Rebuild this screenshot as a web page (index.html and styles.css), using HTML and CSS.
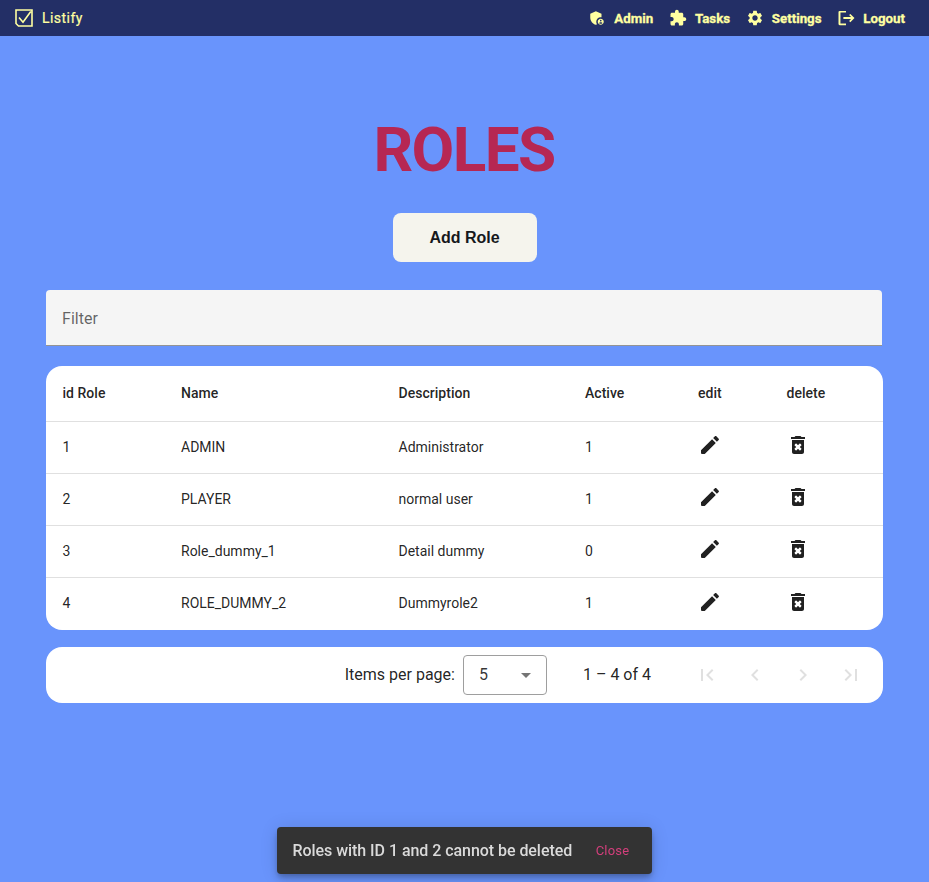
FILE: index.html
```html
<!DOCTYPE html>
<html lang="en">
<head>
<meta charset="utf-8">
<title>Listify</title>
<link rel="stylesheet" href="styles.css">
</head>
<body>
<svg class="sprite" aria-hidden="true">
  <symbol id="edit" viewBox="0 0 24 24"><path d="M3 17.500V20q0 1 1 1h2.750L17.810 9.940l-3.750-3.750L3 17.250zM20.710 7.040c.390-.390.390-1.020 0-1.410l-2.340-2.340c-.390-.390-1.020-.390-1.410 0l-1.830 1.830 3.750 3.750 1.830-1.830z"/></symbol>
  <symbol id="trash" viewBox="0 0 24 24"><path d="M6 19c0 1.100.900 2 2 2h8c1.100 0 2-.900 2-2V7H6v12zm2.460-7.120l1.410-1.410L12 12.590l2.120-2.120 1.410 1.410L13.410 14l2.120 2.120-1.410 1.410L12 15.410l-2.120 2.120-1.410-1.410L10.590 14l-2.130-2.120zM15.500 4l-1-1h-5l-1 1H5v2h14V4z"/><path class="cross" d="M9.400 11.400l5.200 5.200M14.600 11.400l-5.200 5.200"/></symbol>
</svg>
<header class="navbar">
  <a class="brand">
    <svg class="brand-icon" viewBox="0 0 18 18"><path d="M1 1h16v16H3.500L1 14.500zM4 8.500l4 4.800L15.800 2.500"/></svg>
    <span>Listify</span>
  </a>
  <nav class="menu">
    <a class="menu-item"><svg viewBox="0 0 24 24"><path d="M17 11c.34 0 .67.04 1 .09V6.27L10.500 3 3 6.270v4.910c0 4.540 3.200 8.790 7.500 9.820.550-.130 1.080-.320 1.600-.550-.690-.980-1.100-2.170-1.100-3.450 0-3.310 2.690-6 6-6z"/><path d="M17 13c-2.210 0-4 1.790-4 4s1.790 4 4 4 4-1.790 4-4-1.790-4-4-4zm0 1.380c.620 0 1.120.510 1.120 1.120s-.510 1.120-1.120 1.120-1.120-.510-1.120-1.120.500-1.120 1.120-1.120zm0 5.370c-.930 0-1.740-.460-2.240-1.170.050-.720 1.510-1.080 2.240-1.080s2.190.360 2.240 1.080c-.500.710-1.310 1.170-2.240 1.170z"/></svg><span>Admin</span></a>
    <a class="menu-item"><svg viewBox="0 0 24 24"><path d="M20.500 11H19V7c0-1.100-.900-2-2-2h-4V3.500C13 2.120 11.880 1 10.500 1S8 2.120 8 3.500V5H4c-1.100 0-1.990.900-1.990 2v3.800H3.500c1.490 0 2.700 1.210 2.700 2.700s-1.210 2.700-2.700 2.700H2V20c0 1.100.900 2 2 2h3.800v-1.500c0-1.490 1.210-2.700 2.700-2.700 1.490 0 2.700 1.210 2.700 2.700V22H17c1.100 0 2-.900 2-2v-4h1.500c1.380 0 2.500-1.120 2.500-2.500S21.880 11 20.500 11z"/></svg><span>Tasks</span></a>
    <a class="menu-item"><svg viewBox="0 0 24 24"><path d="M19.140 12.940c.040-.300.060-.610.060-.940 0-.320-.020-.640-.070-.940l2.030-1.580c.180-.140.230-.410.120-.610l-1.920-3.320c-.120-.220-.370-.290-.590-.220l-2.390.960c-.500-.380-1.030-.700-1.620-.940l-.360-2.540c-.040-.240-.240-.410-.480-.410h-3.840c-.240 0-.430.170-.470.410l-.360 2.540c-.590.240-1.130.570-1.620.940l-2.390-.960c-.220-.080-.470 0-.590.220L2.740 8.870c-.120.210-.080.470.120.610l2.030 1.580c-.050.300-.090.630-.090.940s.020.640.070.940l-2.030 1.580c-.180.140-.230.410-.120.610l1.920 3.320c.120.220.370.290.590.220l2.390-.960c.500.380 1.030.700 1.620.940l.360 2.540c.050.240.240.410.480.410h3.840c.240 0 .440-.170.470-.410l.360-2.540c.590-.240 1.130-.560 1.620-.940l2.390.960c.220.080.470 0 .590-.220l1.920-3.320c.120-.220.070-.470-.120-.610l-2.010-1.580zM12 15.600c-1.980 0-3.600-1.620-3.600-3.600s1.620-3.600 3.600-3.600 3.600 1.620 3.600 3.600-1.620 3.600-3.600 3.600z"/></svg><span>Settings</span></a>
    <a class="menu-item"><svg viewBox="0 0 24 24"><path d="M12 2.500H3.500a1.500 1.500 0 0 0-1.500 1.500v16a1.500 1.500 0 0 0 1.500 1.500H12v-2.300H4.600V4.800H12zM8.500 10.800v2.400h10.300l-2.700 2.700 1.700 1.600L23.300 12l-5.500-5.500-1.700 1.600 2.700 2.700z"/></svg><span>Logout</span></a>
  </nav>
</header>
<main class="page">
  <h1 class="title">ROLES</h1>
  <button class="add">Add Role</button>
  <div class="filter">Filter</div>
  <div class="table">
    <div class="row head"><span>id Role</span><span>Name</span><span>Description</span><span>Active</span><span>edit</span><span>delete</span></div>
    <div class="row"><span>1</span><span>ADMIN</span><span>Administrator</span><span>1</span><svg><use href="#edit"/></svg><svg><use href="#trash"/></svg></div>
    <div class="row"><span>2</span><span>PLAYER</span><span>normal user</span><span>1</span><svg><use href="#edit"/></svg><svg><use href="#trash"/></svg></div>
    <div class="row"><span>3</span><span>Role_dummy_1</span><span>Detail dummy</span><span>0</span><svg><use href="#edit"/></svg><svg><use href="#trash"/></svg></div>
    <div class="row"><span>4</span><span>ROLE_DUMMY_2</span><span>Dummyrole2</span><span>1</span><svg><use href="#edit"/></svg><svg><use href="#trash"/></svg></div>
  </div>
  <div class="paginator">
    <span class="per-page">Items per page:</span>
    <div class="select"><span>5</span><i class="caret"></i></div>
    <span class="range">1 – 4 of 4</span>
    <div class="pager">
      <svg viewBox="0 0 24 24"><path d="M18.410 16.590L13.820 12l4.590-4.590L17 6l-6 6 6 6zM6 6h2v12H6z"/></svg>
      <svg viewBox="0 0 24 24"><path d="M15.410 7.410L14 6l-6 6 6 6 1.410-1.410L10.830 12z"/></svg>
      <svg viewBox="0 0 24 24"><path d="M10 6L8.590 7.410 13.170 12l-4.580 4.590L10 18l6-6z"/></svg>
      <svg viewBox="0 0 24 24"><path d="M5.590 7.410L10.180 12l-4.590 4.590L7 18l6-6-6-6zM16 6h2v12h-2z"/></svg>
    </div>
  </div>
</main>
<div class="snackbar"><span class="message">Roles with ID 1 and 2 cannot be deleted</span><button class="close">Close</button></div>
</body>
</html>
```
FILE: styles.css
```css
* { box-sizing: border-box; }
body { margin: 0; height: 882px; overflow: hidden; background: #6994fc; font-family: Roboto, sans-serif; color: rgba(0, 0, 0, .87); }
.sprite { display: none; }
svg { fill: currentColor; flex: none; }
.navbar { height: 36px; background: #232f66; color: #ffffa1; display: flex; align-items: center; justify-content: space-between; padding: 0 24px 0 15px; }
.brand { display: flex; align-items: center; gap: 9px; font-size: 14px; font-weight: 400; letter-spacing: .45px; -webkit-text-stroke: .2px currentColor; }
.brand-icon { width: 18px; height: 18px; fill: none; stroke: currentColor; stroke-width: 1.6; }
.menu { display: flex; gap: 15.700px; }
.menu-item { display: flex; align-items: center; gap: 8px; font-size: 13.3px; font-weight: 700; -webkit-text-stroke: .3px currentColor; }
.menu-item span { padding-top: 1px; }
.menu-item svg { width: 18px; height: 18px; }
.page { width: 837px; margin: 0 auto; display: flex; flex-direction: column; align-items: center; }
.title { margin: 78px 1px 0 0; font-size: 62px; line-height: 72px; font-weight: 700; letter-spacing: -1.600px; color: #b62753; }
.add { margin-top: 27px; width: 144px; height: 49px; padding: 1px 0 0; border: 0; border-radius: 8px; background: #f5f4ed; color: #16181c; font: 700 16px "Liberation Sans", Arial, sans-serif; }
.filter { margin-top: 28px; align-self: flex-start; width: 836px; height: 56px; padding-left: 16px; line-height: 57px; background: #f5f5f5; border-bottom: 1px solid #949494; border-radius: 4px 4px 0 0; color: rgba(0, 0, 0, .6); font-size: 16px; letter-spacing: .05px; }
.table { margin-top: 20px; width: 100%; height: 264px; background: #fff; border-radius: 16px; overflow: hidden; font-size: 14px; }
.row { display: grid; grid-template-columns: 118.500px 217.500px 186.500px 113px 88.500px 1fr; height: 52px; align-items: center; padding-left: 16.500px; border-bottom: 1px solid #e0e0e0; }
.row:last-child { border: 0; }
.row span { padding-bottom: 2px; }
.row.head { height: 56px; font-weight: 500; letter-spacing: .03px; }
.row svg { width: 24px; height: 24px; margin-bottom: 5px; }
.row svg:last-child { margin-left: -.2px; }
.cross { fill: none; stroke: #fff; stroke-width: 2.300; }
.paginator { margin-top: 17px; width: 100%; height: 56px; background: #fff; border-radius: 16px; display: flex; align-items: center; justify-content: flex-end; padding-right: 8px; font-size: 16px; }
.per-page, .range, .select span { padding-bottom: 2px; }
.select { margin-left: 8px; width: 84px; height: 40px; border: 1px solid #9e9e9e; border-radius: 4px; display: flex; align-items: center; justify-content: space-between; padding: 0 15px; color: rgba(0, 0, 0, .8); }
.caret { border: 5px solid transparent; border-top-color: #757575; border-bottom: 0; }
.range { margin: 0 32px 0 36px; }
.pager { display: flex; color: #e0e0e0; }
.pager svg { width: 48px; height: 24px; padding: 0 12px; }
.snackbar { position: fixed; left: 277px; top: 827px; width: 375px; height: 47px; padding: 0 7.500px 0 15.500px; display: flex; align-items: center; justify-content: space-between; background: #333; border-radius: 4px; box-shadow: 0 3px 5px -1px rgba(0, 0, 0, .2), 0 6px 10px rgba(0, 0, 0, .14), 0 1px 18px rgba(0, 0, 0, .12); }
.message { font-size: 16px; font-weight: 500; letter-spacing: -.05px; color: #dadada; }
.close { width: 64px; border: 0; background: none; padding: 0; color: #d43f7c; font: 400 13px Roboto, sans-serif; letter-spacing: .2px; }
```
